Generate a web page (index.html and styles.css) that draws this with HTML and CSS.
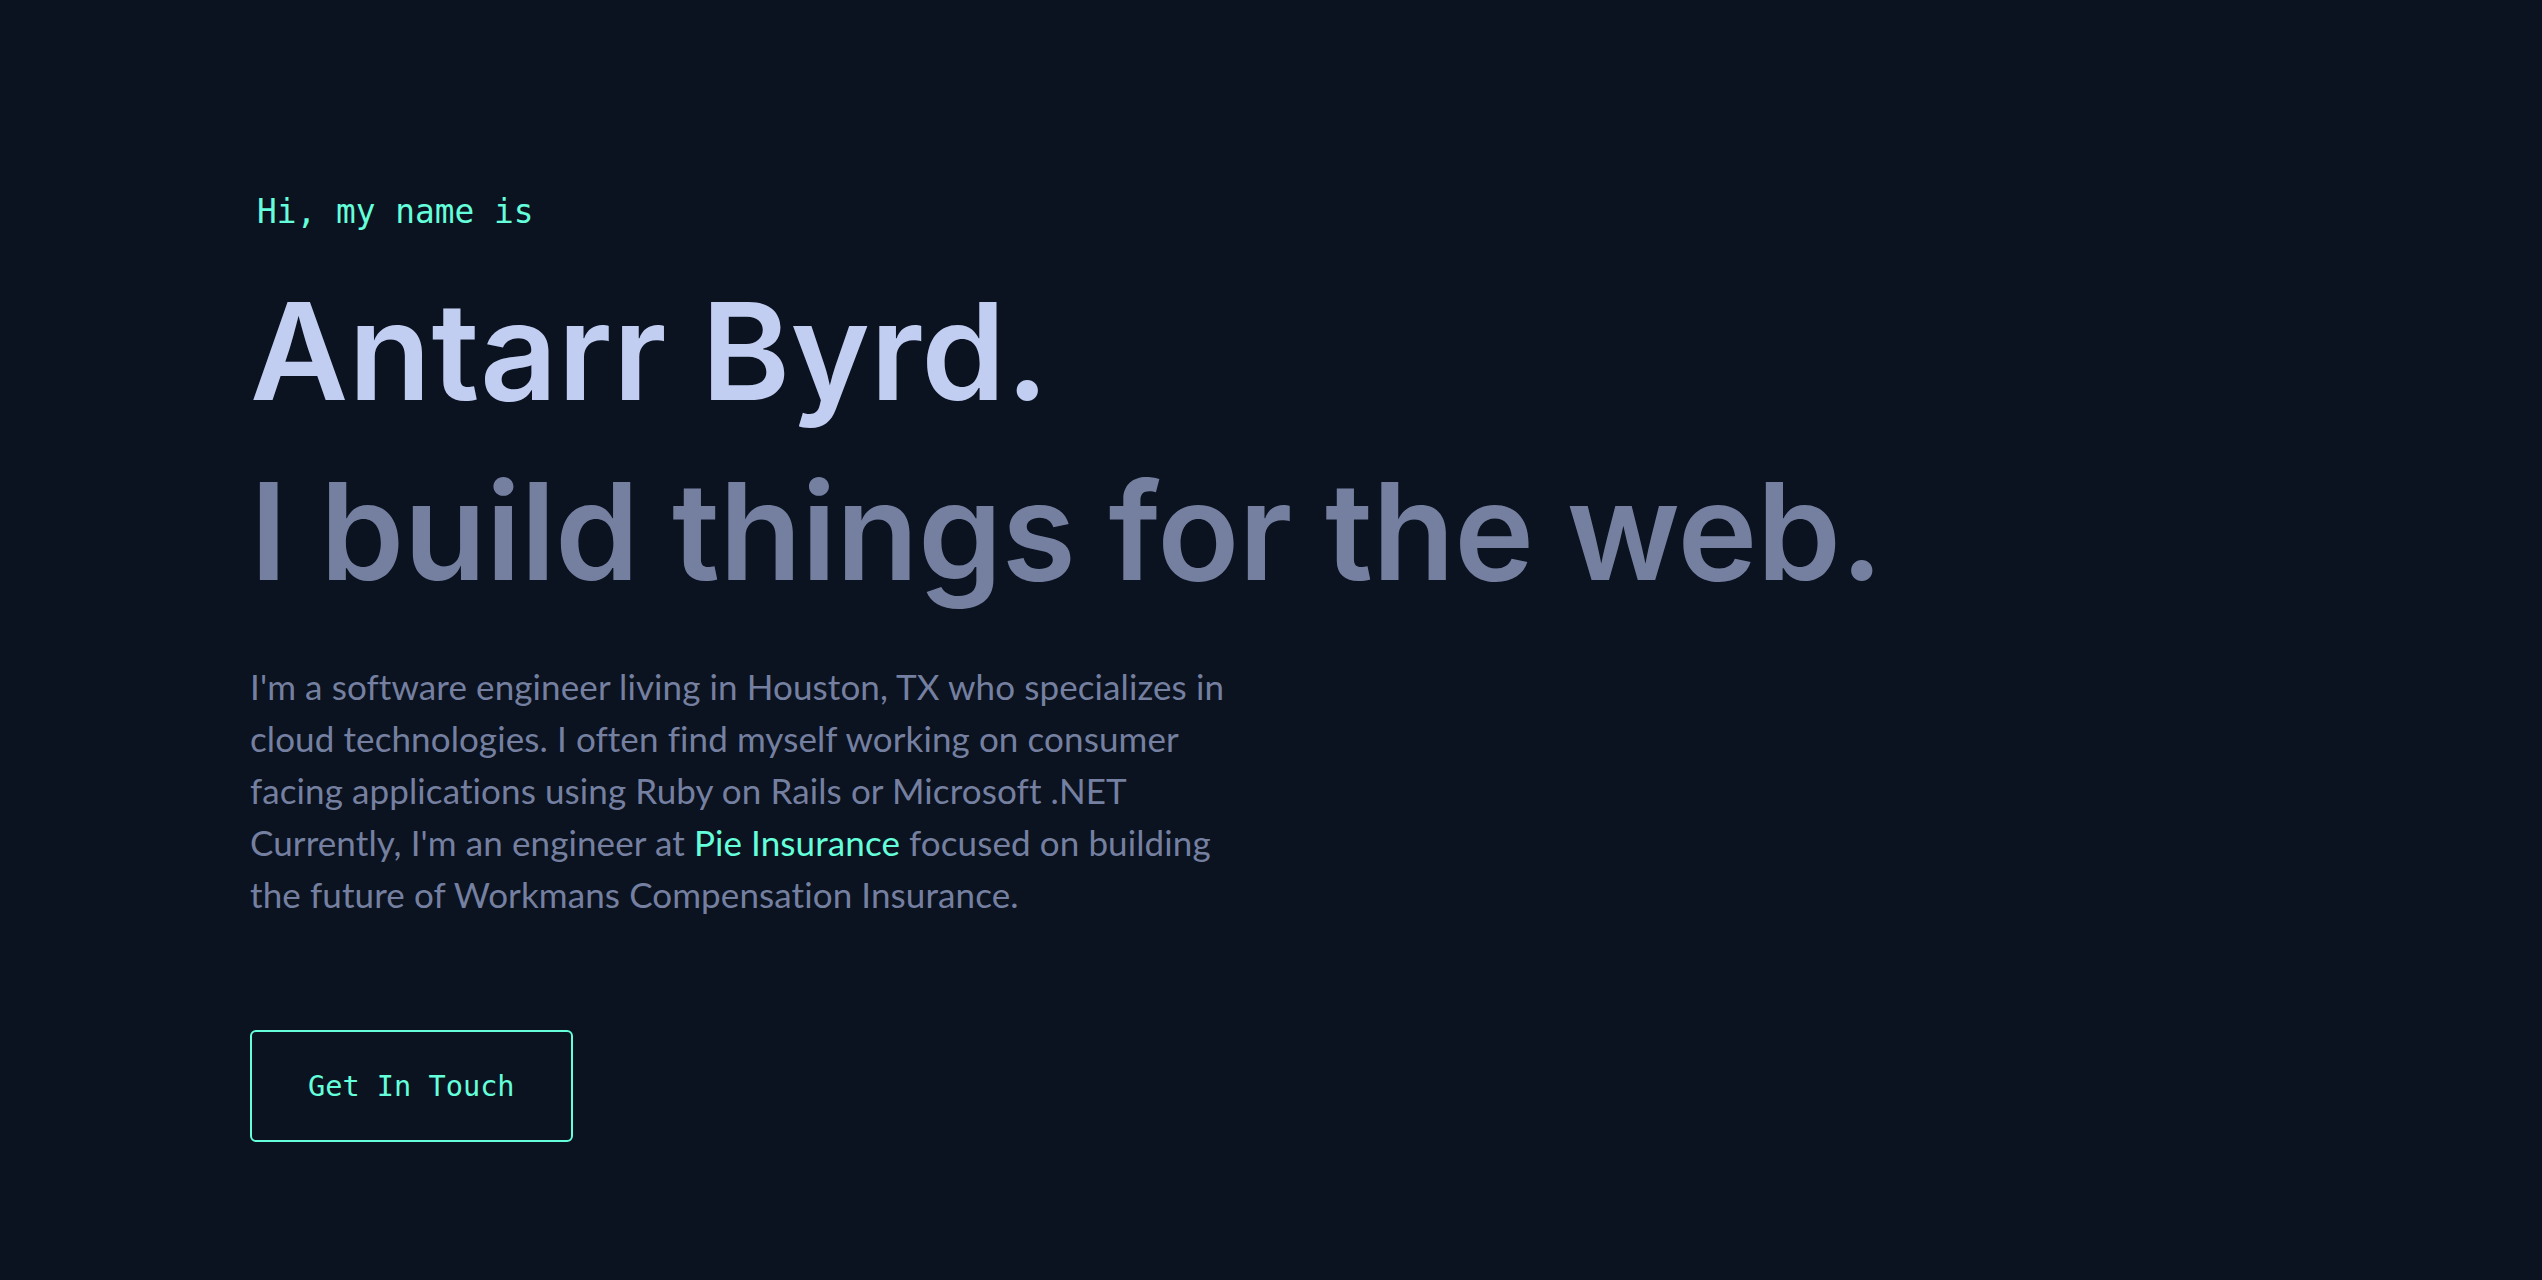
FILE: index.html
```html
<!DOCTYPE html>
<html lang="en">
<head>
<meta charset="utf-8">
<title>Antarr Byrd</title>
<link rel="stylesheet" href="styles.css">
</head>
<body>
<main class="page">
  <section class="hero">
    <h1 class="greeting">Hi, my name is</h1>
    <h2 class="big-heading name">Antarr Byrd.</h2>
    <h3 class="big-heading tagline">I build things for the web.</h3>
    <p class="intro">I'm a software engineer living in Houston, TX who specializes in cloud technologies. I often find myself working on consumer facing applications using Ruby on Rails or Microsoft .NET Currently, I'm an engineer at <a class="link" href="#">Pie Insurance</a> focused on building the future of Workmans Compensation Insurance.</p>
    <a class="cta" href="#">Get In Touch</a>
  </section>
</main>
</body>
</html>
```

FILE: styles.css
```css
html, body {
  margin: 0;
  padding: 0;
}
body {
  background: #0b1220;
  min-height: 1280px;
  font-family: "Lato", "Inter", sans-serif;
}
.page {
  display: flex;
  flex-direction: column;
}
.hero {
  display: flex;
  flex-direction: column;
  align-items: flex-start;
  padding: 192px 0 0 250px;
}
.greeting {
  margin: 0 0 0 7px;
  font-family: "DejaVu Sans Mono", "Liberation Mono", monospace;
  font-weight: 400;
  font-size: 32.8px;
  line-height: 40px;
  color: #64ffda;
}
.big-heading {
  margin: 0;
  font-family: "Inter", "Lato", sans-serif;
  font-weight: 600;
  font-size: 135px;
  line-height: 150px;
}
.name {
  margin-top: 44px;
  color: #c1cdf1;
  letter-spacing: 0.3px;
}
.tagline {
  margin-top: 30px;
  color: #7580a1;
  letter-spacing: -0.65px;
}
.intro {
  margin: 54px 0 0 0;
  max-width: 990px;
  font-size: 35px;
  line-height: 52px;
  color: #7580a1;
  letter-spacing: 0.1px;
}
.link {
  color: #64ffda;
  text-decoration: none;
}
.cta {
  margin-top: 110px;
  padding: 40px 56px;
  border: 2px solid #64ffda;
  border-radius: 6px;
  font-family: "DejaVu Sans Mono", "Liberation Mono", monospace;
  font-size: 28.6px;
  line-height: 28px;
  color: #64ffda;
  text-decoration: none;
}
```
